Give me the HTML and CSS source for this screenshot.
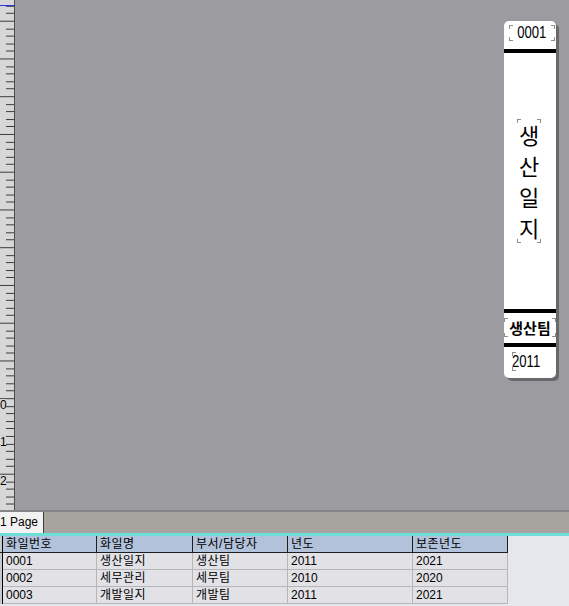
FILE: index.html
```html
<!DOCTYPE html>
<html lang="ko">
<head>
  <meta charset="UTF-8">
  <title>화일 라벨 디자이너</title>
  <link rel="stylesheet" href="styles.css">
</head>
<body>
  <!-- Area desain label -->
  <div class="designer">
    <div class="ruler">
      <svg class="ruler-ticks" width="14" height="510" shape-rendering="crispEdges">
        <defs>
          <pattern id="ticks" x="0" y="20.7" width="14" height="37.75" patternUnits="userSpaceOnUse">
            <rect x="0" y="0" width="14" height="1" fill="#3a3a3a"/>
            <rect x="6" y="7.55" width="8" height="1" fill="#3a3a3a"/>
            <rect x="6" y="15.1" width="8" height="1" fill="#3a3a3a"/>
            <rect x="6" y="22.65" width="8" height="1" fill="#3a3a3a"/>
            <rect x="6" y="30.2" width="8" height="1" fill="#3a3a3a"/>
          </pattern>
        </defs>
        <rect x="0" y="0" width="14" height="510" fill="url(#ticks)"/>
        <rect x="0" y="5" width="14" height="1" fill="#2f2fe6"/>
      </svg>
      <span class="ruler-num num-0">0</span>
      <span class="ruler-num num-1">1</span>
      <span class="ruler-num num-2">2</span>
    </div>

    <div class="canvas">
      <div class="label">
        <div class="sec sec-no"><span class="field field-no"><span class="narrow">0001</span></span></div>
        <div class="bar"></div>
        <div class="sec sec-title"><span class="field field-title">생<br>산<br>일<br>지</span></div>
        <div class="bar"></div>
        <div class="sec sec-dept"><span class="field field-dept">생산팀</span></div>
        <div class="bar"></div>
        <div class="sec sec-year"><span class="field-left field-year"><span class="narrow">2011</span></span></div>
      </div>
    </div>
  </div>

  <!-- Tab halaman -->
  <div class="tabbar">
    <div class="tab">1 Page</div>
  </div>

  <!-- Grid data -->
  <div class="grid-area">
    <div class="grid">
      <div class="ind ind-head"></div>
      <div class="cell head">화일번호</div>
      <div class="cell head">화일명</div>
      <div class="cell head">부서/담당자</div>
      <div class="cell head">년도</div>
      <div class="cell head">보존년도</div>

      <div class="ind"></div>
      <div class="cell">0001</div>
      <div class="cell ko">생산일지</div>
      <div class="cell ko">생산팀</div>
      <div class="cell">2011</div>
      <div class="cell">2021</div>

      <div class="ind"></div>
      <div class="cell">0002</div>
      <div class="cell ko">세무관리</div>
      <div class="cell ko">세무팀</div>
      <div class="cell">2010</div>
      <div class="cell">2020</div>

      <div class="ind"></div>
      <div class="cell">0003</div>
      <div class="cell ko">개발일지</div>
      <div class="cell ko">개발팀</div>
      <div class="cell">2011</div>
      <div class="cell">2021</div>
    </div>
  </div>
</body>
</html>
```

FILE: styles.css
```css
/* Reset dasar */
* {
  margin: 0;
  padding: 0;
  box-sizing: border-box;
}
body {
  width: 569px;
  height: 606px;
  overflow: hidden;
  font-family: "Liberation Sans Narrow", "Liberation Sans", "Noto Sans CJK KR", sans-serif;
  color: #000;
  background: #e4e8ec;
}
/* Area desain */
.designer {
  display: flex;
  height: 512px;
  border-bottom: 2px solid #858585;
}
.ruler {
  position: relative;
  width: 15px;
  background: #d7d7d7;
  border-right: 1px solid #4e4e4e;
}
.ruler-ticks {
  display: block;
}
.ruler-num {
  position: absolute;
  left: 0;
  width: 6px;
  height: 12px;
  font-family: "Liberation Sans", sans-serif;
  font-size: 12px;
  line-height: 12px;
  background: #d7d7d7;
}
.num-0 { top: 399px; }
.num-1 { top: 436px; }
.num-2 { top: 475px; }
.canvas {
  flex: 1;
  display: flex;
  justify-content: flex-end;
  align-items: flex-start;
  padding: 21px 13px 0 0;
  background: #9c9ca0;
}
/* Label samping */
.label {
  width: 52px;
  height: 357px;
  background: #fff;
  border-radius: 5px;
  box-shadow: 3px 3px 0 #696969;
  display: flex;
  flex-direction: column;
}
.bar {
  height: 4px;
  background: #000;
}
.narrow {
  display: inline-block;
  transform: scaleX(0.82);
  transform-origin: center;
}
/* Tanda sudut field */
.field {
  display: block;
  background:
    linear-gradient(#8e8e8e, #8e8e8e) left top / 4px 1px no-repeat,
    linear-gradient(#8e8e8e, #8e8e8e) left top / 1px 4px no-repeat,
    linear-gradient(#8e8e8e, #8e8e8e) right top / 4px 1px no-repeat,
    linear-gradient(#8e8e8e, #8e8e8e) right top / 1px 4px no-repeat,
    linear-gradient(#8e8e8e, #8e8e8e) left bottom / 4px 1px no-repeat,
    linear-gradient(#8e8e8e, #8e8e8e) left bottom / 1px 4px no-repeat,
    linear-gradient(#8e8e8e, #8e8e8e) right bottom / 4px 1px no-repeat,
    linear-gradient(#8e8e8e, #8e8e8e) right bottom / 1px 4px no-repeat;
}
.field-left {
  display: block;
  background:
    linear-gradient(#8e8e8e, #8e8e8e) left top / 4px 1px no-repeat,
    linear-gradient(#8e8e8e, #8e8e8e) left top / 1px 4px no-repeat,
    linear-gradient(#8e8e8e, #8e8e8e) left bottom / 4px 1px no-repeat,
    linear-gradient(#8e8e8e, #8e8e8e) left bottom / 1px 4px no-repeat;
}
.sec-no {
  height: 28px;
  padding: 4px 1px 0 5px;
}
.field-no {
  width: 46px;
  height: 16px;
  font-size: 16px;
  line-height: 16px;
  text-align: center;
}
.sec-title {
  height: 256px;
  padding: 66px 0 0 13px;
}
.field-title {
  width: 24px;
  height: 124px;
  font-family: "Noto Sans CJK KR", sans-serif;
  font-size: 22px;
  line-height: 31px;
  text-align: center;
}
.sec-dept {
  height: 30px;
  padding-top: 5px;
}
.field-dept {
  height: 19px;
  font-family: "Noto Sans CJK KR", sans-serif;
  font-size: 15px;
  font-weight: bold;
  line-height: 19px;
  text-align: center;
  white-space: nowrap;
}
.sec-year {
  flex: 1;
  padding: 5px 0 0 8px;
}
.field-year {
  width: 40px;
  height: 19px;
  font-size: 16px;
  line-height: 19px;
}
.field-year .narrow {
  transform-origin: left center;
}
/* Tab halaman */
.tabbar {
  display: flex;
  height: 24px;
  background: #a7a39f;
  border-bottom: 3px solid #6edfd6;
}
.tab {
  width: 44px;
  background: #f2f2f2;
  border-right: 1px solid #3c3c3c;
  font-family: "Liberation Sans", sans-serif;
  font-size: 12px;
  line-height: 21px;
  white-space: nowrap;
  overflow: hidden;
}
/* Grid data */
.grid-area {
  height: 70px;
  background: #e4e8ec;
}
.grid {
  display: grid;
  grid-template-columns: 3px 94px 96px 95px 125px 95px;
  grid-auto-rows: 17px;
  width: 508px;
}
.ind {
  background: #c6cace;
  border-right: 1px solid #000;
}
.ind-head {
  border-bottom: 1px solid #1e1e1e;
}
.cell {
  padding-left: 3px;
  font-size: 12px;
  line-height: 17px;
  white-space: nowrap;
  overflow: hidden;
  background: #e2e2e6;
  border-right: 1px solid #b6b6b6;
  border-bottom: 1px solid #b6b6b6;
}
.ko,
.head {
  letter-spacing: 0.5px;
}
.head {
  background: #b2c2da;
  border-right-color: #1e1e1e;
  border-bottom-color: #1e1e1e;
}
```
